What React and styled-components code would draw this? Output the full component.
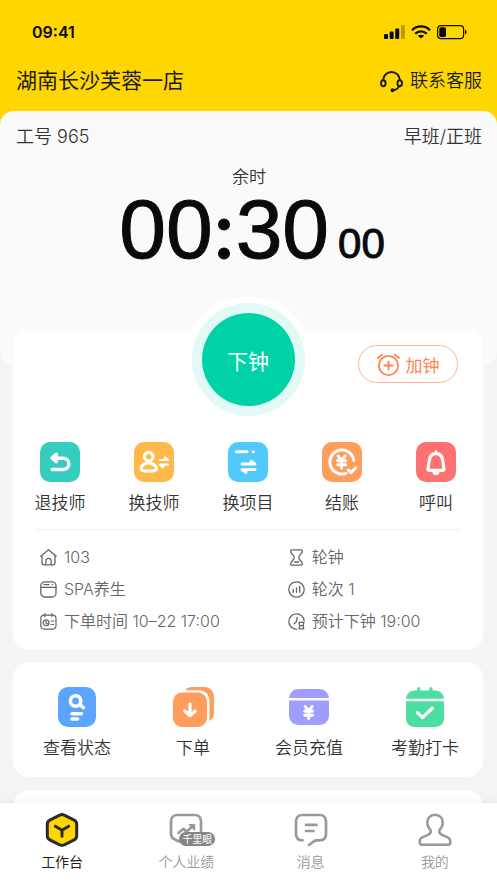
import React from "react";
import styled, { createGlobalStyle } from "styled-components";

const GlobalStyle = createGlobalStyle`
  *, *::before, *::after { box-sizing: border-box; }
  body {
    margin: 0;
    background: #f4f4f4;
    color: #333;
    font-family: Inter, "Noto Sans CJK SC", sans-serif;
    font-weight: 350;
  }
  button, a { font: inherit; color: inherit; }
`;

const Screen = styled.div`
  display: flex;
  flex-direction: column;
  height: 100vh;
`;

const Content = styled.main`
  flex: 1;
  min-height: 0;
  overflow-y: auto;
  scrollbar-width: none;
`;

const Header = styled.header`
  background: #ffd600;
  padding: 20px 15px 29px 16px;
`;

const StatusBar = styled.div`
  display: flex;
  align-items: center;
  justify-content: space-between;
  height: 24px;
  padding: 0 15px 0 16px;
  font-size: 16px;
  font-weight: 600;
  color: #0a0a0a;
`;

const StatusIcons = styled.div`
  display: flex;
  align-items: center;
  gap: 6px;
`;

const TitleRow = styled.div`
  display: flex;
  align-items: center;
  justify-content: space-between;
  margin-top: 21px;
  height: 32px;
  color: #1a1a1a;
`;

const StoreName = styled.h1`
  margin: 0;
  font-size: 21px;
  line-height: 32px;
  font-weight: 400;
`;

const ServiceLink = styled.a`
  display: flex;
  align-items: center;
  gap: 7px;
  font-size: 18px;
  line-height: 28px;
  text-decoration: none;
`;

const TimerPanel = styled.section`
  margin-top: -15px;
  padding: 13px 15px 96px 16px;
  border-radius: 14px;
  background: #fafafa;
`;

const ShiftRow = styled.div`
  display: flex;
  justify-content: space-between;
  align-items: center;
  line-height: 26px;
  font-size: 18px;
`;

const TimerLabel = styled.div`
  margin-top: 15px;
  text-align: center;
  font-size: 17px;
  line-height: 24px;
`;

const Timer = styled.div`
  display: flex;
  justify-content: center;
  align-items: baseline;
  gap: 9px;
  padding-left: 6px;
  color: #0a0a0a;
  font-family: "Liberation Sans", Arial, sans-serif;
  font-weight: 400;
  line-height: 80px;
  font-size: 84px;
  -webkit-text-stroke: 1px #0a0a0a;
`;

const Colon = styled.span`
  font-family: Inter, sans-serif;
  font-size: 76px;
  font-weight: 500;
  line-height: 1;
`;

const Seconds = styled.span`
  font-size: 42px;
  line-height: 1;
`;

const Card = styled.section`
  margin: ${(p) => p.$top || 12}px 14px 0 13px;
  min-height: 96px;
  border-radius: 16px;
  background: #fff;
`;

const ServiceCard = styled(Card)`
  margin-top: -36px;
  padding-bottom: 13px;
`;

const ControlRow = styled.div`
  display: grid;
  grid-template-columns: 1fr auto 1fr;
  align-items: start;
`;

const FinishButton = styled.button`
  grid-column: 2;
  width: 93px;
  height: 93px;
  margin-top: -16px;
  padding: 0;
  border: 0;
  border-radius: 50%;
  background: #00d2a8;
  box-shadow: 0 0 0 10px #e3f9f6, 0 0 0 17px #fff;
  color: #fff;
  font-size: 21px;
  font-weight: 400;
`;

const AddButton = styled.button`
  justify-self: end;
  display: flex;
  align-items: center;
  justify-content: center;
  gap: 6px;
  width: 100px;
  height: 38px;
  margin: 16px 25px 0 0;
  padding: 0;
  border: 1px solid #ffb496;
  border-radius: 19px;
  background: #fff;
  color: #ff8352;
  font-size: 17px;
  font-weight: 400;
`;

const ActionGrid = styled.div`
  display: grid;
  grid-template-columns: repeat(${(p) => p.$columns}, 1fr);
  padding: ${(p) => p.$pad};
`;

const Action = styled.button`
  display: flex;
  flex-direction: column;
  align-items: center;
  gap: 8px;
  padding: 0;
  border: 0;
  background: none;
  font-size: 17px;
  line-height: 26px;
  white-space: nowrap;
`;

const InfoList = styled.ul`
  display: grid;
  grid-template-columns: 3fr 2fr;
  row-gap: 8px;
  margin: 13px 23px 0;
  padding: 15px 7px 4px 4px;
  border-top: 1px solid #f0f0f0;
  list-style: none;
  color: #666;
`;

const InfoItem = styled.li`
  display: flex;
  align-items: center;
  gap: 7px;
  font-size: 16px;
  line-height: 24px;
  white-space: nowrap;
`;

const TabBar = styled.nav`
  display: grid;
  grid-template-columns: repeat(4, 1fr);
  height: 80px;
  padding-top: 10px;
  background: #fff;
  box-shadow: 0 0 8px rgba(0, 0, 0, 0.07);
  position: relative;
`;

const Tab = styled.a`
  display: flex;
  flex-direction: column;
  align-items: center;
  gap: 4px;
  text-decoration: none;
  font-size: 14px;
  line-height: 22px;
  color: ${(p) => (p.$active ? "#1f1f1f" : "#999")};
  font-weight: ${(p) => (p.$active ? 400 : 350)};
`;

const TabIcon = styled.span`
  position: relative;
  display: block;
  height: 34px;
`;

const TabBadge = styled.span`
  position: absolute;
  left: 10px;
  top: 19px;
  padding: 0 3px;
  border-radius: 7px;
  background: #858585;
  color: #fff;
  font-size: 10px;
  line-height: 14px;
  font-weight: 400;
  white-space: nowrap;
`;

const Svg = styled.svg`
  display: block;
  flex: none;
  overflow: visible;
  fill: none;
  stroke-linecap: round;
  stroke-linejoin: round;
`;

const Icon = ({ w, h, sw = 1, color = "currentColor", children }) => (
  <Svg width={w} height={h} viewBox={`0 0 ${w} ${h}`} stroke={color} strokeWidth={sw} aria-hidden="true">
    {children}
  </Svg>
);

const Tile = ({ bg, sw = 3.4, children }) => (
  <Icon w={40} h={40} sw={sw} color="#fff">
    <rect width="40" height="40" rx="10" fill={bg} stroke="none" />
    {children}
  </Icon>
);

const SignalIcon = () => (
  <Icon w={21} h={14}>
    <g fill="#0a0a0a" stroke="none">
      <rect x="0" y="9" width="4" height="5" rx="1" />
      <rect x="5.6" y="6.5" width="4" height="7.5" rx="1" />
      <rect x="11.2" y="3.5" width="4" height="10.5" rx="1" />
      <rect x="17" y="0" width="4" height="14" rx="1" opacity="0.28" />
    </g>
  </Icon>
);

const WifiIcon = () => (
  <Icon w={20} h={14} sw={2.2} color="#0a0a0a">
    <g strokeLinecap="butt">
      <path d="M1 5.2C6 .2 14 .2 19 5.2" />
      <path d="M4.2 8.7c3.2-3.2 8.4-3.2 11.6 0" />
    </g>
    <path d="M10 13.6 6.8 10.8c1.7-1.5 4.7-1.5 6.4 0Z" fill="#0a0a0a" stroke="none" />
  </Icon>
);

const BatteryIcon = () => (
  <Icon w={30} h={14} sw={1.2} color="#0a0a0a">
    <rect x=".6" y=".6" width="26" height="13" rx="3.4" />
    <rect x="2.3" y="2.3" width="6.7" height="9.6" rx="1.6" fill="#0a0a0a" stroke="none" />
    <path d="M28 4.7c2 .7 2 4 0 4.7Z" fill="#0a0a0a" stroke="none" />
  </Icon>
);

const HeadsetIcon = () => (
  <Icon w={23} h={21} sw={1.9}>
    <path d="M3 9.2C3.5 4.4 7 1 11.5 1S19.5 4.4 20 9.2" />
    <ellipse cx="3.3" cy="12.2" rx="2.3" ry="3" />
    <ellipse cx="19.7" cy="12.2" rx="2.3" ry="3" />
    <path d="M19.2 15.2c-1 2.2-3.2 3.8-6.5 4" />
    <circle cx="12.5" cy="19.2" r="1" fill="currentColor" />
  </Icon>
);

const AlarmPlusIcon = () => (
  <Icon w={23} h={23} sw={1.8}>
    <circle cx="11.5" cy="12.5" r="9.6" />
    <path d="M11.5 8.3v8.4M7.3 12.5h8.4M1 5 5.2 1.6M22 5l-4.2-3.4" />
  </Icon>
);

const yen = (
  <path d="m-3.5-6 3.5 4.5 3.5-4.5M0-1.5V6.3M-4-1.2h8M-4 2.7h8" />
);

const ReturnIcon = () => (
  <Tile bg="#35cdbd">
    <path d="M16.3 12.3 12 16l4.3 3.6v-3.3H23.3a5.6 5.6 0 0 1 0 11.2H12.2M16.3 12.3v4" />
  </Tile>
);

const SwapPersonIcon = () => (
  <Tile bg="#ffb84a" sw={3.2}>
    <circle cx="14.7" cy="14.7" r="4.3" />
    <path d="M11.7 21.6c-2.6 1-4.6 3.4-4.6 5.4 0 1.6 3 2.2 7.6 2.2s7.7-.6 7.7-2.2c0-2-2.3-4.4-4.8-5.4-1.8-.7-4.2-.7-5.9 0Z" />
    <g strokeWidth="2.2" fill="#fff">
      <path d="M26 18h8l-3-2.6V18M34 22.7h-8l3 2.6v-2.6" />
    </g>
  </Tile>
);

const SwapProjectIcon = () => (
  <Tile bg="#52c9fb" sw={3}>
    <path d="M8.2 9.8H19M25.3 9.8h.1" />
    <path d="M14 22h13l-4-2.8V22M27 27.7H14l4 2.9v-2.9" strokeWidth="2.8" />
  </Tile>
);

const CheckoutIcon = () => (
  <Tile bg="#ff9d5c" sw={3}>
    <path d="M24 31.3A12 12 0 1 1 31.8 18.3" />
    <path d="m26.3 28 2.5 2.7 5-4.8" />
    <g transform="translate(19.6 20)" strokeWidth="2.9">{yen}</g>
  </Tile>
);

const BellIcon = () => (
  <Tile bg="#ff7070" sw={3.2}>
    <path d="M20 11.6c-4.5 0-6.3 3.2-6.8 7.1L12 26.4c-.3 1.5.3 2 1.7 2h12.6c1.4 0 2-.5 1.7-2l-1.2-7.7c-.5-3.9-2.3-7.1-6.8-7.1Z" />
    <path d="M20 9.5v1M17.7 30.5c.6 1.8 4 1.8 4.6 0Z" strokeWidth="2.5" />
  </Tile>
);

const SearchDocIcon = () => (
  <Icon w={38} h={40} sw={3.5} color="#fff">
    <rect width="38" height="40" rx="10" fill="#5ca5ff" stroke="none" />
    <circle cx="17.6" cy="14" r="5.2" />
    <path d="m21.8 17.5 3.7 3.2M14 26.7h9.5M14 32h5.5" />
  </Icon>
);

const OrderIcon = () => (
  <Icon w={41} h={40} sw={3.2} color="#fff">
    <path d="M12 3.5C13.5 1.2 15.7 0 18.5 0H31c6 0 10 4 10 10v16c0 3.5-1.5 6-4.5 8V14c0-6-4-10.5-10-10.5Z" fill="#ff9d5c" stroke="none" />
    <rect x="-1" y="3.5" width="37" height="37" rx="10.5" fill="#fff" stroke="none" />
    <rect y="5.5" width="34" height="34.5" rx="9" fill="#ff9d5c" stroke="none" />
    <path d="M17 17v11.5M11.8 24l5.2 4.7 5.2-4.7" />
  </Icon>
);

const RechargeIcon = () => (
  <Icon w={40} h={40} color="#fff">
    <path d="M0 11C.8 5.4 4.4 2 10 2h20c5.6 0 9.2 3.4 10 9Z" fill="#9f9eff" stroke="none" />
    <path d="M0 13.4h40V28c0 6-4 10-10 10H10C4 38 0 34 0 28Z" fill="#9f9eff" stroke="none" />
    <g transform="translate(19.7 25.5)" strokeWidth="2.9">{yen}</g>
  </Icon>
);

const CheckInIcon = () => (
  <Icon w={38} h={40} sw={3.2} color="#fff">
    <path d="M12.7 1.6v4M25 1.6v4" stroke="#4adea0" />
    <path d="M0 11.7C.8 6.5 4 3.5 9 3.5h20c5 0 8.2 3 9 8.2Z" fill="#4adea0" stroke="none" />
    <path d="M0 14.2h38V31c0 5.5-3.5 9-9 9H9c-5.5 0-9-3.5-9-9Z" fill="#4adea0" stroke="none" />
    <path d="m11.5 25.7 5 4.8 10-9.5" />
  </Icon>
);

const HomeIcon = () => (
  <Icon w={17} h={17} sw={1.3}>
    <path d="M.8 7.2 8.5.8l7.7 6.4M2 6.3v7.2c0 1.5.8 2.3 2.3 2.3h8.4c1.5 0 2.3-.8 2.3-2.3V6.3" />
    <path d="M5.8 15.6v-3.5a2.7 2.7 0 0 1 5.4 0v3.5" />
  </Icon>
);

const BoxIcon = () => (
  <Icon w={17} h={17} sw={1.3}>
    <rect x=".8" y=".8" width="15.2" height="15.2" rx="4" />
    <path d="M1 6.3h15M4 3.7h5M12.3 3.7h.4" />
  </Icon>
);

const OrderTimeIcon = () => (
  <Icon w={17} h={17} sw={1.2}>
    <rect x=".8" y="2.2" width="15.2" height="13.9" rx="3.5" />
    <path d="M5 .6v3.2M11.8.6v3.2M11 8h3M11 11.5h2.6M6 8.2v1.7l1.4.8" />
    <circle cx="6" cy="9.7" r="2.9" />
  </Icon>
);

const HourglassIcon = () => (
  <Icon w={17} h={17} sw={1.3}>
    <path d="M4.3.8h8.4c1.5 0 2 .9 1.5 2.1-1 2.4-3.4 3.3-3.4 5.5s2.4 3.3 3.4 5.7c.5 1.2 0 2.1-1.5 2.1H4.3c-1.5 0-2-.9-1.5-2.1 1-2.4 3.4-3.5 3.4-5.7s-2.4-3.1-3.4-5.5C2.3 1.7 2.8.8 4.3.8Z" />
    <path d="M6.5 13h4" />
  </Icon>
);

const RoundIcon = () => (
  <Icon w={17} h={17} sw={1.3}>
    <circle cx="8.5" cy="8.5" r="7.7" />
    <path d="M5.3 8.5v2.8M8.5 7v4.3M11.7 5.5v5.8" />
  </Icon>
);

const EndTimeIcon = () => (
  <Icon w={17} h={17} sw={1.3}>
    <path d="M8.5 16.2A7.7 7.7 0 1 1 16.2 8M9.2 4.5 8.3 8.8l-2.2 2" />
    <path d="M11 9.4h4.8l-.7 3.2.7 3.2H11l.7-3.2Z" />
    <path d="M11.8 12.6h3.2" />
  </Icon>
);

const WorkbenchIcon = () => (
  <Icon w={34} h={34} sw={3} color="#2b2b2b">
    <path d="M14.7 2.2c1.5-.8 3.1-.8 4.6 0l9.9 5c1.6.8 2.5 2.2 2.5 4v11.6c0 1.8-.9 3.2-2.5 4l-9.9 5c-1.5.8-3.1.8-4.6 0l-9.9-5c-1.6-.8-2.5-2.2-2.5-4V11.2c0-1.8.9-3.2 2.5-4Z" fill="#ffd600" />
    <path d="m10.3 13.3 6.7 4 6.7-4M17 17.3v6" />
  </Icon>
);

const TrendIcon = () => (
  <Icon w={34} h={34} sw={2.7}>
    <path d="M10 28.5 6 26.5c-2.6-1.3-4-2.8-4-5.6V8.5C2 4.5 4.5 2 8.5 2h17C29.5 2 32 4.5 32 8.5V19" />
    <path d="m9.5 20 5-4.2 3 3 5-4.6" />
    <path d="M20.5 11.8h5v5Z" fill="currentColor" strokeWidth="1.5" />
  </Icon>
);

const MessageIcon = () => (
  <Icon w={34} h={34} sw={2.7}>
    <path d="M8.5 27.3C4.5 27.3 2 25 2 21V8.5C2 4.5 4.5 2 8.5 2h17C29.5 2 32 4.5 32 8.5V21c0 4-2.5 6.3-6.5 6.3h-3c-1.3 0-2.2.4-3 1.2L15 32" />
    <path d="M12 11.8h10.5M12 18h7.5" />
  </Icon>
);

const ProfileIcon = () => (
  <Icon w={34} h={34} sw={2.5}>
    <path d="M17 1.7c-4.5 0-7.7 3.3-7.7 7.8 0 3.2 1.2 5.7 3.3 7.6.7 2.3-.2 3.7-2.6 4.7l-5.3 2.3c-2 .9-3 2.2-3 4.3v1.1c0 1.5.8 2.2 2.3 2.2h26c1.5 0 2.3-.7 2.3-2.2v-1.1c0-2.1-1-3.4-3-4.3L24 21.8c-2.4-1-3.3-2.4-2.6-4.7 2.1-1.9 3.3-4.4 3.3-7.6 0-4.5-3.2-7.8-7.7-7.8Z" />
  </Icon>
);

const serviceActions = [
  ["退技师", ReturnIcon],
  ["换技师", SwapPersonIcon],
  ["换项目", SwapProjectIcon],
  ["结账", CheckoutIcon],
  ["呼叫", BellIcon],
];

const shopActions = [
  ["查看状态", SearchDocIcon],
  ["下单", OrderIcon],
  ["会员充值", RechargeIcon],
  ["考勤打卡", CheckInIcon],
];

const info = [
  ["103", HomeIcon],
  ["轮钟", HourglassIcon],
  ["SPA养生", BoxIcon],
  ["轮次 1", RoundIcon],
  ["下单时间 10–22 17:00", OrderTimeIcon],
  ["预计下钟 19:00", EndTimeIcon],
];

const tabs = [
  ["工作台", WorkbenchIcon],
  ["个人业绩", TrendIcon, "千里眼"],
  ["消息", MessageIcon],
  ["我的", ProfileIcon],
];

const Actions = ({ items, pad }) => (
  <ActionGrid $columns={items.length} $pad={pad}>
    {items.map(([label, Glyph]) => (
      <Action key={label} type="button">
        <Glyph />
        {label}
      </Action>
    ))}
  </ActionGrid>
);

export default function App() {
  return (
    <Screen lang="zh-CN">
      <GlobalStyle />
      <Content>
        <Header>
          <StatusBar>
            <span>09:41</span>
            <StatusIcons>
              <SignalIcon />
              <WifiIcon />
              <BatteryIcon />
            </StatusIcons>
          </StatusBar>
          <TitleRow>
            <StoreName>湖南长沙芙蓉一店</StoreName>
            <ServiceLink href="#service">
              <HeadsetIcon />
              联系客服
            </ServiceLink>
          </TitleRow>
        </Header>

        <TimerPanel>
          <ShiftRow>
            <span>工号 965</span>
            <span>早班/正班</span>
          </ShiftRow>
          <TimerLabel>余时</TimerLabel>
          <Timer role="timer">
            <span>
              00<Colon>:</Colon>30
            </span>
            <Seconds>00</Seconds>
          </Timer>
        </TimerPanel>

        <ServiceCard>
          <ControlRow>
            <FinishButton type="button">下钟</FinishButton>
            <AddButton type="button">
              <AlarmPlusIcon />
              加钟
            </AddButton>
          </ControlRow>
          <Actions items={serviceActions} pad="36px 0 0" />
          <InfoList>
            {info.map(([text, Glyph]) => (
              <InfoItem key={text}>
                <Glyph />
                {text}
              </InfoItem>
            ))}
          </InfoList>
        </ServiceCard>

        <Card>
          <Actions items={shopActions} pad="25px 0 16px 6px" />
        </Card>
        <Card $top={13} />
      </Content>

      <TabBar>
        {tabs.map(([label, Glyph, badge], i) => (
          <Tab key={label} href="#" $active={i === 0} aria-current={i === 0 ? "page" : undefined}>
            <TabIcon>
              <Glyph />
              {badge && <TabBadge>{badge}</TabBadge>}
            </TabIcon>
            {label}
          </Tab>
        ))}
      </TabBar>
    </Screen>
  );
}
